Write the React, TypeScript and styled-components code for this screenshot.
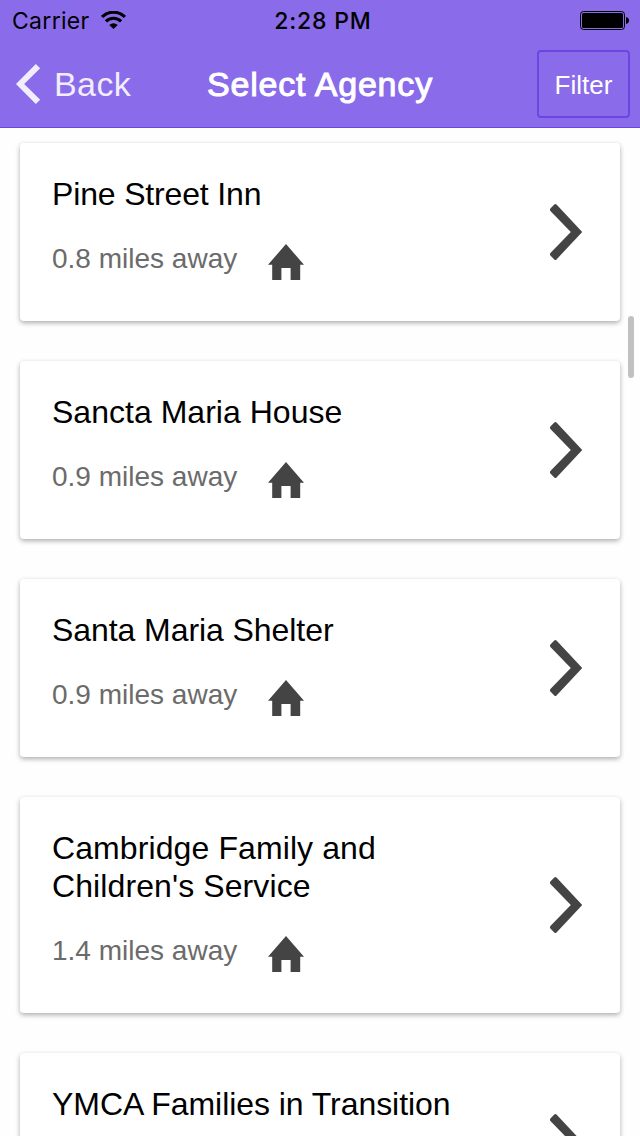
import React from "react";
import styled, { createGlobalStyle } from "styled-components";

const GlobalStyle = createGlobalStyle`
  * { box-sizing: border-box; }
  body {
    margin: 0;
    background: #fefefe;
    font-family: "Liberation Sans", Arial, sans-serif;
  }
`;

const Screen = styled.div`
  position: relative;
  width: 640px;
  height: 1136px;
  overflow: hidden;
`;

const Header = styled.header`
  height: 128px;
  background: #8a6bea;
  border-bottom: 1px solid #7044e2;
`;

const StatusBar = styled.div`
  display: grid;
  grid-template-columns: 1fr auto 1fr;
  align-items: center;
  height: 40px;
  padding: 2px 11px 0 12px;
  font-family: Inter, sans-serif;
  font-size: 23px;
  line-height: 38px;
  color: #000;
`;

const Carrier = styled.div`
  display: flex;
  align-items: center;
  gap: 11px;
  letter-spacing: 0.3px;
`;

const Clock = styled.div`
  padding-left: 5px;
  font-weight: 550;
  letter-spacing: 0.8px;
`;

const WifiIcon = styled.svg`
  margin-bottom: 1px;
`;

const BatteryIcon = styled.svg`
  justify-self: end;
  margin-bottom: 1px;
`;

const NavBar = styled.nav`
  display: grid;
  grid-template-columns: 1fr auto 1fr;
  align-items: center;
  height: 87px;
  padding: 0 10px 0 16px;
`;

const BackButton = styled.button`
  display: flex;
  align-items: center;
  gap: 13px;
  padding: 0;
  border: 0;
  background: none;
  color: #f1edfd;
  font: 34px/40px "Liberation Sans", Arial, sans-serif;
  letter-spacing: 0.4px;
`;

const Title = styled.h1`
  margin: 0 6px 0 0;
  font-size: 34px;
  line-height: 40px;
  font-weight: 400;
  letter-spacing: 0.8px;
  color: #fff;
  -webkit-text-stroke: 1px #fff;
`;

const FilterButton = styled.button`
  justify-self: end;
  width: 93px;
  height: 68px;
  padding: 2px 0 0;
  border: 2px solid #7044e2;
  border-radius: 4px;
  background: none;
  color: #fff;
  font: 26px/30px "Liberation Sans", Arial, sans-serif;
`;

const List = styled.main`
  display: flex;
  flex-direction: column;
  gap: 40px;
  padding: 15px 20px 0;
`;

const Card = styled.article`
  display: flex;
  align-items: center;
  justify-content: space-between;
  flex-shrink: 0;
  padding: 32px 38px 32px 32px;
  border-radius: 4px;
  background: #fff;
  box-shadow: 0 2px 5px rgba(0, 0, 0, 0.32);
`;

const Details = styled.div`
  width: 420px;
`;

const Name = styled.h2<{ $tracking: number }>`
  margin: 0;
  font-size: 32px;
  line-height: 38px;
  font-weight: 400;
  letter-spacing: ${(p) => p.$tracking}px;
  color: #000;
`;

const Meta = styled.div`
  display: flex;
  align-items: flex-start;
  gap: 31px;
  height: 76px;
  padding-top: 30px;
`;

const Distance = styled.span`
  width: 185px;
  white-space: nowrap;
  font-size: 28px;
  line-height: 32px;
  color: #6b6b6b;
`;

type Agency = { name: string; miles?: string; tracking: number };

const agencies: Agency[] = [
  { name: "Pine Street Inn", miles: "0.8", tracking: -0.16 },
  { name: "Sancta Maria House", miles: "0.9", tracking: 0.02 },
  { name: "Santa Maria Shelter", miles: "0.9", tracking: -0.07 },
  { name: "Cambridge Family and Children's Service", miles: "1.4", tracking: 0.1 },
  { name: "YMCA Families in Transition", tracking: -0.06 },
];

const ScrollThumb = styled.div`
  position: absolute;
  top: 316px;
  right: 6px;
  width: 6px;
  height: 62px;
  border-radius: 3px;
  background: #c1c1c1;
`;

const Wifi = () => (
  <WifiIcon width="25" height="19" viewBox="0 0 25 19" fill="none" stroke="#000" strokeWidth="3.2">
    <path d="M1.1 6A16 16 0 0 1 23.9 6" />
    <path d="M4.9 10.4A10.8 10.8 0 0 1 20.1 10.4" />
    <path d="M12.5 18L8.2 13.9Q12.5 10.7 16.8 13.9Z" fill="#000" stroke="none" />
  </WifiIcon>
);

const Battery = () => (
  <BatteryIcon width="49" height="19" viewBox="0 0 49 19">
    <rect x="0.5" y="0.5" width="44" height="18" rx="3" fill="none" stroke="#000" />
    <rect x="2" y="2" width="41" height="15" rx="1.6" />
    <path d="M46 6C48 6.6 49 7.8 49 9.5S48 12.4 46 13Z" />
  </BatteryIcon>
);

const BackChevron = () => (
  <svg width="25" height="40" viewBox="0 0 25 40" fill="#f1edfd">
    <path d="M19.8 0L24.2 4.2L8.2 20L24.2 35.8L19.8 40L0 20Z" />
  </svg>
);

const Chevron = () => (
  <svg width="32" height="56" viewBox="0 0 32 56" fill="#444">
    <path d="M4.3 0.6Q5.4 -0.4 6.5 0.6L32.3 28L6.5 55.4Q5.4 56.4 4.3 55.4L0.4 51.5Q-0.5 50.3 0.4 49.1L20.8 28L0.4 6.9Q-0.5 5.7 0.4 4.5Z" />
  </svg>
);

const House = () => (
  <svg width="36" height="36" viewBox="0 0 36 36" fill="#444">
    <path d="M18 0L36 20.8H32.2V36H22.6V24H13.4V36H4.2V20.8H0Z" />
  </svg>
);

const HouseSlot = styled.div`
  display: flex;
  padding-top: 1px;
`;

export default function App() {
  return (
    <Screen>
      <GlobalStyle />
      <Header>
        <StatusBar>
          <Carrier>
            Carrier
            <Wifi />
          </Carrier>
          <Clock>2:28 PM</Clock>
          <Battery />
        </StatusBar>
        <NavBar>
          <BackButton>
            <BackChevron />
            Back
          </BackButton>
          <Title>Select Agency</Title>
          <FilterButton>Filter</FilterButton>
        </NavBar>
      </Header>
      <List>
        {agencies.map((agency) => (
          <Card key={agency.name}>
            <Details>
              <Name $tracking={agency.tracking}>{agency.name}</Name>
              <Meta>
                {agency.miles && (
                  <>
                    <Distance>{agency.miles} miles away</Distance>
                    <HouseSlot>
                      <House />
                    </HouseSlot>
                  </>
                )}
              </Meta>
            </Details>
            <Chevron />
          </Card>
        ))}
      </List>
      <ScrollThumb />
    </Screen>
  );
}
